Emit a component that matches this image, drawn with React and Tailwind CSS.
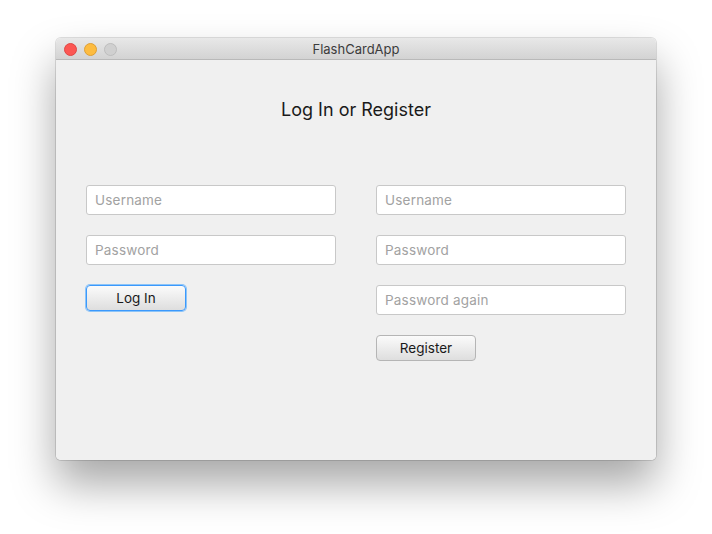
import { useState } from 'react';

const font = { fontFamily: 'Inter, "Noto Sans", sans-serif' };

const Field = ({ placeholder, type = 'text' }) => (
    <input
        type={type}
        placeholder={placeholder}
        className="w-full h-[30px] bg-white rounded-[3px] border border-[#c8c8c8] px-[8px] text-[13.5px] tracking-[0.2px] text-[#333] placeholder:text-[#a2a2a2] outline-none"
    />
);

const App = () => {
    const [, setUser] = useState('');

    return (
        <div className="w-[712px] h-[534px] bg-white flex justify-center pt-[38px]" style={font}>
            <div className="w-[600px] h-[422px] rounded-[5px] flex flex-col overflow-hidden shadow-[0_24px_44px_rgba(0,0,0,0.35),0_0_0_1px_rgba(0,0,0,0.12)]">
                <div className="h-[22px] flex items-center relative bg-gradient-to-b from-[#e8e8e8] to-[#d3d3d3] border-b border-[#b9b9b9]">
                    <div className="flex gap-[7px] pl-[8px] pt-[1px]">
                        <span className="w-[13px] h-[13px] rounded-full bg-[#fc5753] border border-[#df4744]"></span>
                        <span className="w-[13px] h-[13px] rounded-full bg-[#fdbc40] border border-[#de9f34]"></span>
                        <span className="w-[13px] h-[13px] rounded-full bg-[#d0d0d0] border border-[#bdbdbd]"></span>
                    </div>
                    <span className="absolute inset-x-0 top-[3px] text-center text-[13px] leading-[16px] text-[#3c3c3c]">FlashCardApp</span>
                </div>

                <div className="flex-1 bg-[#f0f0f0] px-[30px] flex flex-col">
                    <h1 className="text-[18px] text-[#1a1a1a] text-center mt-[38px] leading-[24px]">Log In or Register</h1>

                    <div className="grid grid-cols-2 gap-x-[40px] mt-[63px]">
                        <div className="flex flex-col gap-[20px]">
                            <Field placeholder="Username" />
                            <Field placeholder="Password" type="password" />
                            <button className="w-[100px] h-[26px] rounded-[4px] border border-[#3b99fc] ring-1 ring-[#8cc4f8] bg-gradient-to-b from-[#fbfbfb] to-[#dedede] text-[13.5px] text-[#1a1a1a]">
                                Log In
                            </button>
                        </div>
                        <div className="flex flex-col gap-[20px]" onChange={(e) => setUser(e.target.value)}>
                            <Field placeholder="Username" />
                            <Field placeholder="Password" type="password" />
                            <Field placeholder="Password again" type="password" />
                            <button className="w-[100px] h-[26px] rounded-[4px] border border-[#b5b5b5] bg-gradient-to-b from-[#fbfbfb] to-[#dedede] text-[13.5px] text-[#1a1a1a]">
                                Register
                            </button>
                        </div>
                    </div>
                </div>
            </div>
        </div>
    );
};

export default App;
